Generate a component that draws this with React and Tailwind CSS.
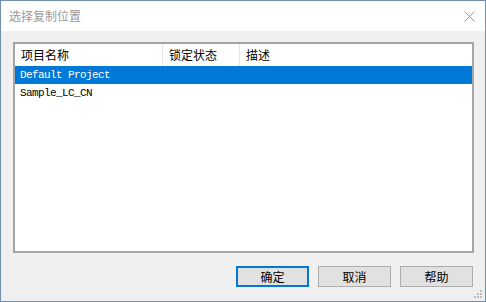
import React from "react";

const rows = ["Default Project", "Sample_LC_CN"];

const cjk = { fontFamily: '"Microsoft YaHei", "Noto Sans CJK SC", sans-serif' };

function Grip() {
  return (
    <svg width="10" height="10" viewBox="0 0 10 10" className="absolute right-[2px] bottom-[2px]">
      {[[7, 1], [4, 4], [7, 4], [1, 7], [4, 7], [7, 7]].map(([x, y], i) => (
        <rect key={i} x={x} y={y} width="2" height="2" fill="#bcbcbc" />
      ))}
    </svg>
  );
}

export default function App() {
  const [selected, setSelected] = React.useState(0);

  return (
    <div className="w-[486px] h-[302px] border border-[#6f8fae] flex flex-col bg-[#f0f0f0] relative select-none" style={cjk}>
      {/* title bar */}
      <div className="h-[30px] bg-white flex items-center justify-between pl-[8px] pr-[10px] shrink-0">
        <span className="text-[12px] text-[#9a9a9a] leading-none">选择复制位置</span>
        <svg width="11" height="11" viewBox="0 0 11 11">
          <path d="M0.5 0.5 L10.5 10.5 M10.5 0.5 L0.5 10.5" stroke="#9a9a9a" strokeWidth="1" />
        </svg>
      </div>

      {/* body */}
      <div className="flex-1 flex flex-col pt-[11px] pl-[12px] pr-[11px]">
        <div className="h-[211px] border-2 border-[#a5a5a5] bg-white flex flex-col">
          <div className="h-[22px] flex text-[12px] text-black leading-none">
            <div className="w-[148px] border-r border-[#e5e5e5] flex items-center pl-[6px]">项目名称</div>
            <div className="w-[77px] border-r border-[#e5e5e5] flex items-center pl-[6px]">锁定状态</div>
            <div className="flex-1 flex items-center pl-[6px]">描述</div>
          </div>
          {rows.map((r, i) => (
            <div
              key={r}
              onClick={() => setSelected(i)}
              className={`h-[18px] flex items-center pl-[5px] pt-[1px] text-[11px] tracking-[-0.6px] ${selected === i ? "bg-[#0078d7] text-white" : "text-black"}`}
              style={{ fontFamily: '"Liberation Mono", monospace' }}
            >
              {r}
            </div>
          ))}
        </div>

        <div className="flex justify-end gap-[9px] mt-[13px] pr-[1px]">
          <button className="w-[73px] h-[21px] bg-[#e1e1e1] border-2 border-[#0078d7] text-[12px] text-black leading-none">确定</button>
          <button className="w-[73px] h-[21px] bg-[#e1e1e1] border border-[#adadad] text-[12px] text-black leading-none">取消</button>
          <button className="w-[73px] h-[21px] bg-[#e1e1e1] border border-[#adadad] text-[12px] text-black leading-none">帮助</button>
        </div>
      </div>
      <Grip />
    </div>
  );
}
